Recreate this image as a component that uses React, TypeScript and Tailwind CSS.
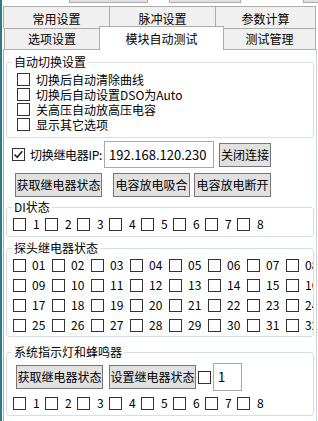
import React from 'react';

const Box = ({ checked = false }: { checked?: boolean }) => (
  <span className="relative block w-[13px] h-[13px] shrink-0 border border-[#333] bg-white">
    {checked && (
      <svg viewBox="0 0 13 13" className="absolute -left-px -top-px w-[13px] h-[13px]">
        <path d="M2.5 6.5 L5.2 9.2 L10.3 3.2" fill="none" stroke="#222" strokeWidth="1.6" />
      </svg>
    )}
  </span>
);

const Btn = ({ label, w }: { label: string; w: string }) => (
  <div className={`${w} h-[24px] shrink-0 flex items-center justify-center bg-[#e1e1e1] border border-[#777] text-[12px] leading-[14px] whitespace-nowrap`}>
    {label}
  </div>
);

const Tab = ({ label, w, last = false }: { label: string; w: string; last?: boolean }) => (
  <div
    className={`${w} h-[22px] shrink-0 flex items-start justify-center pt-[3px] bg-[#f0f0f0] border-t border-l border-[#adadad] ${last ? 'border-r' : ''}`}
  >
    {label}
  </div>
);

const Group = ({ title, className, children }: { title: string; className: string; children: React.ReactNode }) => (
  <fieldset className={`mx-[2px] min-w-0 border border-[#d5dfe5] rounded-[3px] ${className}`}>
    <legend className="ml-[5px] px-[2px] leading-[14px]">{title}</legend>
    {children}
  </fieldset>
);

const options = ['切换后自动清除曲线', '切换后自动设置DSO为Auto', '关高压自动放高压电容', '显示其它选项'];
const eight = ['1', '2', '3', '4', '5', '6', '7', '8'];
const probes = Array.from({ length: 32 }, (_, i) => String(i + 1).padStart(2, '0'));

const EightRow = () => (
  <div className="flex pl-[6px]">
    {eight.map((n) => (
      <div key={n} className="w-[32px] shrink-0 flex items-center gap-[7px] leading-[14px]">
        <Box />
        <span>{n}</span>
      </div>
    ))}
  </div>
);

export default function App() {
  return (
    <div className="w-[318px] h-[421px] overflow-hidden bg-white border-l-2 border-[#2f7a8a] text-black text-[12px] font-['Noto_Sans_CJK_SC',sans-serif]">
      {/* leftover buttons from the row above */}
      <div className="relative h-[3px]">
        <div className="absolute left-[67px] top-0 w-[79px] h-[3px] bg-[#e1e1e1] border-b border-x border-[#adadad]" />
        <div className="absolute left-[167px] top-0 w-[72px] h-[3px] bg-[#e1e1e1] border-b border-x border-[#adadad]" />
        <div className="absolute left-[301px] top-0 w-[20px] h-[3px] bg-[#e1e1e1] border-b border-l border-[#adadad]" />
      </div>

      {/* tabs, back row */}
      <div className="flex ml-[1px] mt-[3px]">
        <Tab label="常用设置" w="w-[106px]" />
        <Tab label="脉冲设置" w="w-[106px]" />
        <Tab label="参数计算" w="w-[101px]" last />
      </div>

      {/* tabs, front row */}
      <div className="relative z-10 flex items-start ml-[2px] -mt-[2px] h-[24px] -mb-px">
        <div className="w-[95px] h-[21px] mt-[2px] shrink-0 flex items-center justify-center bg-[#f0f0f0] border-t border-l border-[#adadad]">
          选项设置
        </div>
        <div className="w-[125px] h-[24px] shrink-0 flex items-start justify-center pt-[3px] bg-white border-t border-x border-[#adadad]">
          模块自动测试
        </div>
        <div className="w-[92px] h-[21px] mt-[2px] shrink-0 flex items-center justify-center bg-[#f0f0f0] border-t border-r border-[#adadad]">
          测试管理
        </div>
      </div>

      {/* tab page */}
      <div className="ml-[1px] w-[314px] h-[380px] border border-b-0 border-[#adadad] border-r-[#c6d6de] bg-white">
        <Group title="自动切换设置" className="mt-[5px] pt-[3px] pb-[5px]">
          {options.map((o) => (
            <div key={o} className="h-[15px] flex items-center gap-[6px] pl-[10px] leading-[14px]">
              <Box />
              <span>{o}</span>
            </div>
          ))}
        </Group>

        <div className="flex items-center mt-[3px] pl-[8px] h-[27px]">
          <Box checked />
          <span className="w-[79px] pl-[5px] shrink-0 leading-[14px] whitespace-nowrap tracking-[-0.3px]">切换继电器IP:</span>
          <div className="w-[110px] h-[27px] shrink-0 flex items-center pl-[4px] border border-[#a9a9a9] text-[13px]">
            192.168.120.230
          </div>
          <div className="ml-[5px]">
            <Btn label="关闭连接" w="w-[52px]" />
          </div>
        </div>

        <div className="flex mt-[5px] pl-[11px]">
          <Btn label="获取继电器状态" w="w-[87px]" />
          <div className="ml-[11px]">
            <Btn label="电容放电吸合" w="w-[77px]" />
          </div>
          <div className="ml-[4px]">
            <Btn label="电容放电断开" w="w-[77px]" />
          </div>
        </div>

        <Group title="DI状态" className="mt-[3px] pt-[3px] pb-[5px]">
          <EightRow />
        </Group>

        <Group title="探头继电器状态" className="mt-[4px] pt-[1px] pb-[2px]">
          <div className="overflow-hidden py-[2px]">
            <div className="grid grid-cols-[repeat(8,39px)] gap-y-[6px] pl-[6px] w-max">
              {probes.map((p) => (
                <div key={p} className="flex items-center gap-[6px] leading-[14px] whitespace-nowrap">
                  <Box />
                  <span>{p}</span>
                </div>
              ))}
            </div>
          </div>
        </Group>

        <Group title="系统指示灯和蜂鸣器" className="mt-[8px] pt-[4px] pb-[5px]">
          <div className="flex items-center pl-[9px] h-[28px]">
            <Btn label="获取继电器状态" w="w-[87px]" />
            <div className="ml-[6px]">
              <Btn label="设置继电器状态" w="w-[87px]" />
            </div>
            <div className="ml-[2px]">
              <Box />
            </div>
            <div className="ml-[2px] w-[29px] h-[28px] flex items-center pl-[4px] border border-[#a9a9a9] text-[13px]">
              1
            </div>
          </div>
          <div className="mt-[5px]">
            <EightRow />
          </div>
        </Group>
      </div>
    </div>
  );
}
